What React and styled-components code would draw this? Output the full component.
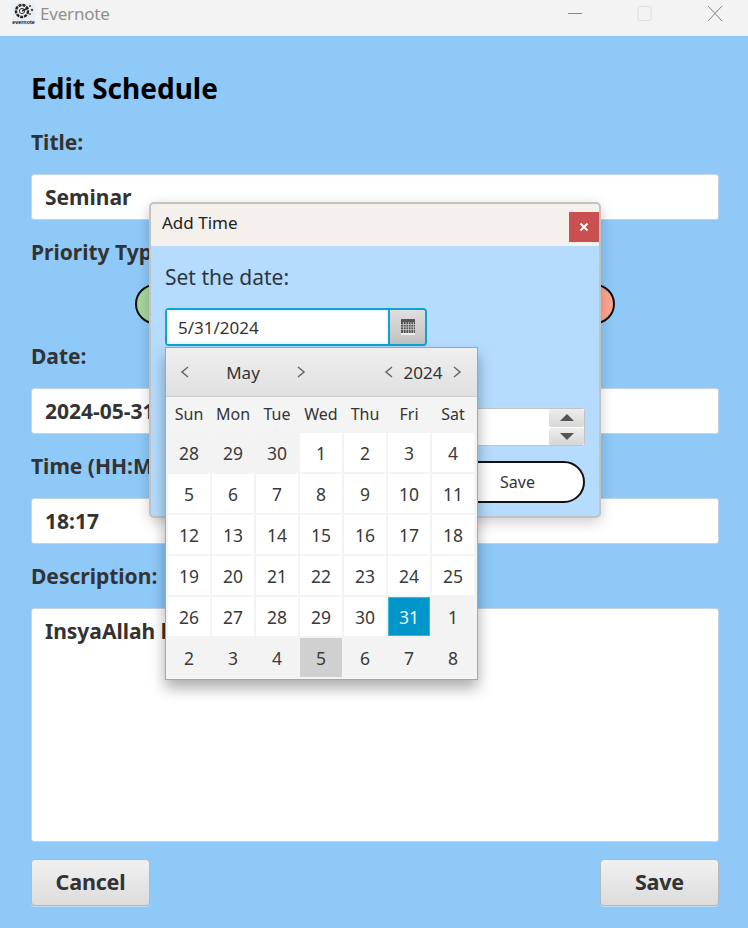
import styled, { createGlobalStyle } from "styled-components";

const GlobalStyle = createGlobalStyle`
  html, body {
    margin: 0;
    padding: 0;
    height: 100%;
    overflow: hidden;
    font-family: "Noto Sans", "Open Sans", sans-serif;
  }
  * {
    box-sizing: border-box;
  }
`;

const Page = styled.div`
  position: relative;
  width: 748px;
  height: 928px;
  display: flex;
  flex-direction: column;
  background: #8fc9f8;
  overflow: hidden;
`;

const TitleBar = styled.div`
  height: 36px;
  background: #f3f3f3;
  display: flex;
  align-items: flex-start;
  padding-top: 3px;
  padding-left: 12px;
  flex-shrink: 0;
`;

const AppName = styled.span`
  margin-left: 5px;
  line-height: 22px;
  font-size: 17px;
  color: #8f8f8f;
  letter-spacing: -0.2px;
`;

const WindowControls = styled.div`
  margin-left: auto;
  margin-right: -2px;
  display: flex;
  align-items: center;
`;

const WindowButton = styled.div`
  width: 70px;
  height: 22px;
  display: flex;
  align-items: center;
  justify-content: center;
`;

const Form = styled.div`
  flex: 1;
  display: flex;
  flex-direction: column;
  padding: 34px 29px 21px 31px;
`;

const Heading = styled.h1`
  margin: 0 0 20px;
  height: 36px;
  line-height: 36px;
  font-size: 28px;
  font-weight: 700;
  color: #000;
`;

const Label = styled.div`
  height: 32px;
  line-height: 32px;
  margin-bottom: 16px;
  font-size: 21px;
  font-weight: 700;
  color: #333;
`;

const Field = styled.div`
  height: ${(p) => p.$height || 46}px;
  margin-bottom: ${(p) => p.$after ?? 0}px;
  background: #fff;
  border: 1px solid #c4d4e4;
  border-radius: 3px;
  padding: ${(p) => (p.$multi ? "8px 13px" : "0 13px")};
  display: ${(p) => (p.$multi ? "block" : "flex")};
  align-items: center;
  font-size: 21px;
  font-weight: 700;
  color: #333;
`;

const PriorityRow = styled.div`
  display: flex;
  justify-content: space-between;
  margin: 0 104px 16px;
  height: 40px;
`;

const PriorityPill = styled.div`
  width: 70px;
  height: 40px;
  border-radius: 20px;
  border: 2px solid #111;
  background: ${(p) => p.$color};
`;

const Actions = styled.div`
  display: flex;
  justify-content: space-between;
  margin-top: 17px;
`;

const ActionButton = styled.div`
  width: 119px;
  height: 47px;
  display: flex;
  align-items: center;
  justify-content: center;
  padding-bottom: 2px;
  background: linear-gradient(#f1f1f1, #dcdcdc);
  border: 1px solid #b4b9be;
  border-radius: 4px;
  box-shadow: 0 1px 0 #c4dcf2;
  font-size: 21.5px;
  font-weight: 700;
  color: #333;
  letter-spacing: -0.2px;
`;

const Dialog = styled.div`
  position: absolute;
  left: 149px;
  top: 202px;
  width: 452px;
  height: 316px;
  display: flex;
  flex-direction: column;
  background: #b5dcff;
  border: 2px solid #c2c2c2;
  border-radius: 5px;
  box-shadow: 0 4px 14px rgba(0, 0, 0, 0.2);
`;

const DialogHeader = styled.div`
  height: 42px;
  display: flex;
  align-items: flex-start;
  justify-content: space-between;
  padding: 7px 0 0 11px;
  background: #f4f1ec;
  border-radius: 3px 3px 0 0;
  line-height: 24px;
  font-size: 17px;
  color: #222;
`;

const CloseButton = styled.div`
  width: 30px;
  height: 30px;
  margin-top: 1px;
  display: flex;
  align-items: center;
  justify-content: center;
  background: #c94f50;
`;

const DialogBody = styled.div`
  flex: 1;
  display: flex;
  flex-direction: column;
  padding: 16px 14px 0;
`;

const DialogLabel = styled.div`
  height: 30px;
  line-height: 30px;
  font-size: 21px;
  color: #2d3640;
  margin-bottom: 16px;
`;

const DatePicker = styled.div`
  position: relative;
  display: flex;
  width: 262px;
  height: 38px;
  border: 2px solid #0fa3cf;
  border-radius: 4px;
`;

const DateInput = styled.div`
  flex: 1;
  display: flex;
  align-items: center;
  padding-left: 11px;
  background: #fff;
  box-shadow: inset 0 0 3px #bfeaf8;
  border-right: 2px solid #0fa3cf;
  font-size: 17px;
  color: #333;
`;

const CalendarButton = styled.div`
  width: 35px;
  display: flex;
  align-items: center;
  justify-content: center;
  background: linear-gradient(#dedede, #c2c2c2);
  border-radius: 0 2px 2px 0;
`;

const Popup = styled.div`
  position: absolute;
  left: -2px;
  top: 37px;
  width: 313px;
  height: 333px;
  background: #f4f4f4;
  border: 1px solid #a6a6a6;
  box-shadow: 0 8px 14px rgba(0, 0, 0, 0.33);
  z-index: 2;
`;

const PopupHeader = styled.div`
  height: 49px;
  display: flex;
  align-items: center;
  justify-content: space-between;
  padding: 0 15px 0 14px;
  background: linear-gradient(#efefef, #e0e0e0);
  border-bottom: 1px solid #cfcfcf;
  font-size: 17px;
  color: #333;
`;

const Spinner = styled.div`
  display: flex;
  align-items: center;
  justify-content: space-between;
  width: ${(p) => p.$width}px;
`;

const DayNames = styled.div`
  display: grid;
  grid-template-columns: repeat(7, 44px);
  padding-left: 1px;
  height: 33px;
  margin-bottom: 3px;
  align-items: center;
  font-size: 16px;
  color: #333;
`;

const DayName = styled.div`
  text-align: center;
`;

const DayGrid = styled.div`
  display: grid;
  grid-template-columns: repeat(7, 42px);
  grid-auto-rows: 39px;
  column-gap: 2px;
  row-gap: 2px;
  padding-left: 2px;
`;

const Day = styled.div`
  display: flex;
  align-items: center;
  justify-content: center;
  font-size: 17.5px;
  color: ${(p) => (p.$selected ? "#e8f8ff" : "#3a3a3a")};
  background: ${(p) =>
    p.$selected ? "#0096c9" : p.$today ? "#d0d0d0" : p.$muted ? "#f3f3f3" : "#fff"};
  border: ${(p) => (p.$selected ? "1px solid #3fb3da" : "none")};
`;

const TimeRow = styled.div`
  position: absolute;
  right: 14px;
  top: 204px;
  display: flex;
  width: 200px;
  height: 38px;
  background: #fff;
  border: 1px solid #c4c4c4;
  border-radius: 3px;
  justify-content: flex-end;
`;

const Steppers = styled.div`
  width: 35px;
  display: flex;
  flex-direction: column;
  gap: 1px;
  background: #fff;
`;

const Stepper = styled.div`
  flex: 1;
  display: flex;
  align-items: center;
  justify-content: center;
  background: linear-gradient(#eeeeee, #d6d6d6);
  border-radius: 2px;
`;

const SaveTime = styled.div`
  position: absolute;
  right: 14px;
  top: 257px;
  width: 240px;
  height: 42px;
  display: flex;
  align-items: center;
  justify-content: flex-end;
  padding-right: 48px;
  background: #fff;
  border: 2px solid #111;
  border-radius: 21px;
  font-size: 16px;
  color: #333;
`;

const Chevron = ({ dir }) => (
  <svg width="10" height="14" viewBox="0 0 10 14">
    <path
      d={dir === "left" ? "M8 2 L2 7 L8 12" : "M2 2 L8 7 L2 12"}
      fill="none"
      stroke="#666"
      strokeWidth="1.5"
    />
  </svg>
);

const Logo = () => (
  <svg width="23" height="22" viewBox="0 0 23 22">
    <rect width="23" height="22" fill="#e8f0f6" />
    <circle cx="10" cy="8" r="6" fill="none" stroke="#222" strokeWidth="2.4" strokeDasharray="3 1" />
    <circle cx="10" cy="8" r="2.6" fill="#f3f3f3" stroke="#333" />
    <path d="M10 8 L16 5" stroke="#222" strokeWidth="1.5" />
    <circle cx="18" cy="3" r="1" fill="#333" />
    <circle cx="20" cy="7" r="1.2" fill="#444" />
    <circle cx="18" cy="11" r="1" fill="#555" />
    <text x="11.5" y="20.5" fontSize="5.4" fontWeight="700" textAnchor="middle" fill="#111" fontFamily="Liberation Sans, sans-serif">
      evernote
    </text>
  </svg>
);

const weeks = [
  [28, 29, 30, 1, 2, 3, 4],
  [5, 6, 7, 8, 9, 10, 11],
  [12, 13, 14, 15, 16, 17, 18],
  [19, 20, 21, 22, 23, 24, 25],
  [26, 27, 28, 29, 30, 31, 1],
  [2, 3, 4, 5, 6, 7, 8],
];

const isMuted = (week, value) => (week === 0 && value > 20) || (week >= 4 && value < 20);

export default function App() {
  return (
    <Page>
      <GlobalStyle />
      <TitleBar>
        <Logo />
        <AppName>Evernote</AppName>
        <WindowControls>
          <WindowButton>
            <svg width="16" height="16" viewBox="0 0 16 16">
              <path d="M1 7.5 H15" stroke="#8a8a8a" strokeWidth="1" />
            </svg>
          </WindowButton>
          <WindowButton>
            <svg width="16" height="16" viewBox="0 0 16 16">
              <rect x="1" y="0.5" width="13" height="14" rx="1.5" fill="none" stroke="#dedede" />
            </svg>
          </WindowButton>
          <WindowButton>
            <svg width="16" height="16" viewBox="0 0 16 16">
              <path d="M1 0 L15 15 M15 0 L1 15" stroke="#808080" strokeWidth="1" />
            </svg>
          </WindowButton>
        </WindowControls>
      </TitleBar>

      <Form>
        <Heading>Edit Schedule</Heading>
        <Label>Title:</Label>
        <Field $after={16}>Seminar</Field>
        <Label>Priority Type:</Label>
        <PriorityRow>
          <PriorityPill $color="#a5d6a0" />
          <PriorityPill $color="#f7e08a" />
          <PriorityPill $color="#ffa68f" />
        </PriorityRow>
        <Label>Date:</Label>
        <Field $after={16}>2024-05-31</Field>
        <Label>Time (HH:MM):</Label>
        <Field $after={16}>18:17</Field>
        <Label>Description:</Label>
        <Field $multi $height={234}>InsyaAllah lancar</Field>
        <Actions>
          <ActionButton>Cancel</ActionButton>
          <ActionButton>Save</ActionButton>
        </Actions>
      </Form>

      <Dialog>
        <DialogHeader>
          Add Time
          <CloseButton>
            <svg width="10" height="10" viewBox="0 0 10 10">
              <path d="M1.5 1.5 L8.5 8.5 M8.5 1.5 L1.5 8.5" stroke="#fff" strokeWidth="2" />
            </svg>
          </CloseButton>
        </DialogHeader>
        <DialogBody>
          <DialogLabel>Set the date:</DialogLabel>
          <DatePicker>
            <DateInput>5/31/2024</DateInput>
            <CalendarButton>
              <svg width="14" height="16" viewBox="0 0 14 16">
                <rect y="0" width="14" height="14" fill="#555" />
                <rect y="14" width="14" height="2" fill="#eee" />
                <path d="M0 5.5 H14 M0 8 H14 M0 10.5 H14 M2.5 3 V14 M5 3 V14 M7.5 3 V14 M10 3 V14 M12.5 3 V14" stroke="#c8c8c8" strokeWidth="0.8" />
              </svg>
            </CalendarButton>
            <Popup>
              <PopupHeader>
                <Spinner $width={126}>
                  <Chevron dir="left" />
                  May
                  <Chevron dir="right" />
                </Spinner>
                <Spinner $width={78}>
                  <Chevron dir="left" />
                  2024
                  <Chevron dir="right" />
                </Spinner>
              </PopupHeader>
              <DayNames>
                {["Sun", "Mon", "Tue", "Wed", "Thu", "Fri", "Sat"].map((name) => (
                  <DayName key={name}>{name}</DayName>
                ))}
              </DayNames>
              <DayGrid>
                {weeks.map((week, w) =>
                  week.map((value, d) => (
                    <Day
                      key={`${w}-${d}`}
                      $muted={isMuted(w, value)}
                      $selected={w === 4 && value === 31}
                      $today={w === 5 && value === 5}
                    >
                      {value}
                    </Day>
                  ))
                )}
              </DayGrid>
            </Popup>
          </DatePicker>
          <TimeRow>
            <Steppers>
              <Stepper>
                <svg width="14" height="7" viewBox="0 0 14 7">
                  <path d="M7 0 L14 7 H0 Z" fill="#555" />
                </svg>
              </Stepper>
              <Stepper>
                <svg width="14" height="7" viewBox="0 0 14 7">
                  <path d="M0 0 H14 L7 7 Z" fill="#555" />
                </svg>
              </Stepper>
            </Steppers>
          </TimeRow>
          <SaveTime>Save</SaveTime>
        </DialogBody>
      </Dialog>
    </Page>
  );
}
